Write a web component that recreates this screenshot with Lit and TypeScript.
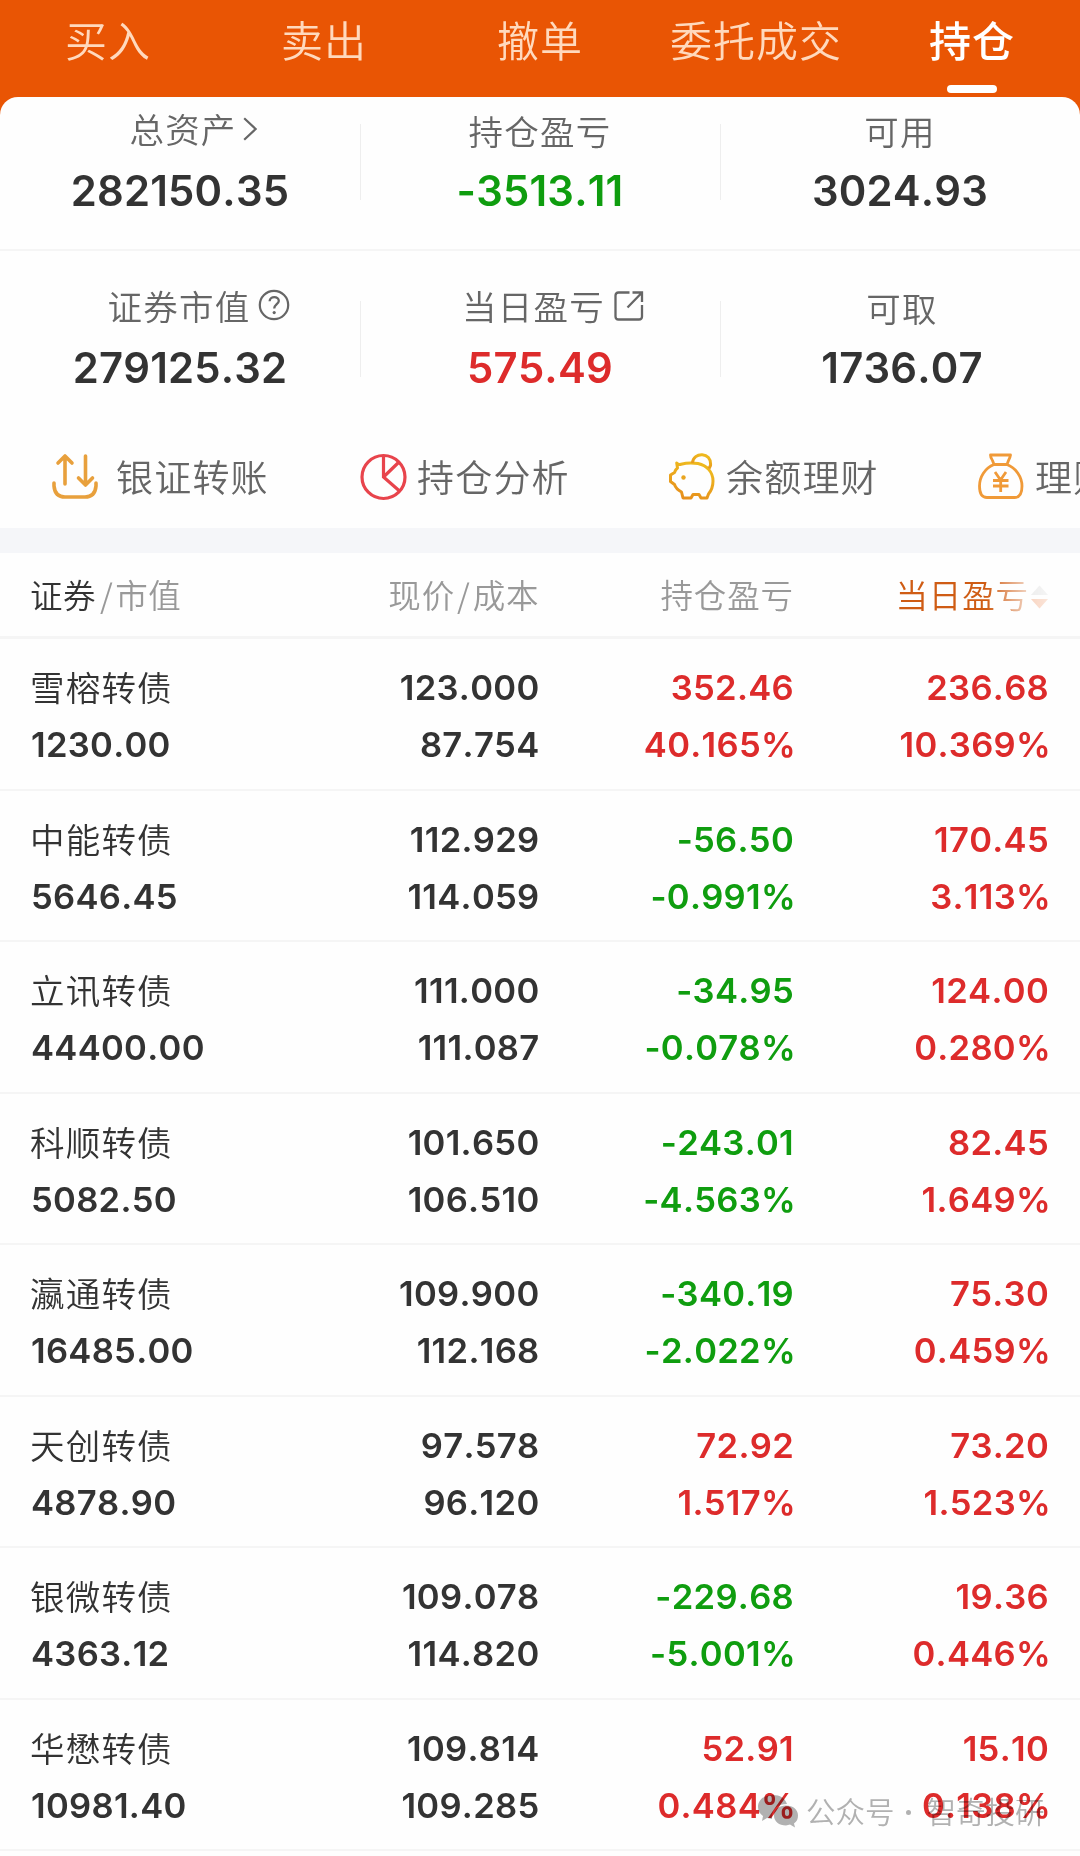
import { LitElement, html, css, svg } from "lit";
import { customElement } from "lit/decorators.js";

type Holding = [string, string, string, string, string, string, string, string];

const HOLDINGS: Holding[] = [
  ["雪榕转债", "1230.00", "123.000", "87.754", "352.46", "40.165%", "236.68", "10.369%"],
  ["中能转债", "5646.45", "112.929", "114.059", "-56.50", "-0.991%", "170.45", "3.113%"],
  ["立讯转债", "44400.00", "111.000", "111.087", "-34.95", "-0.078%", "124.00", "0.280%"],
  ["科顺转债", "5082.50", "101.650", "106.510", "-243.01", "-4.563%", "82.45", "1.649%"],
  ["瀛通转债", "16485.00", "109.900", "112.168", "-340.19", "-2.022%", "75.30", "0.459%"],
  ["天创转债", "4878.90", "97.578", "96.120", "72.92", "1.517%", "73.20", "1.523%"],
  ["银微转债", "4363.12", "109.078", "114.820", "-229.68", "-5.001%", "19.36", "0.446%"],
  ["华懋转债", "10981.40", "109.814", "109.285", "52.91", "0.484%", "15.10", "0.138%"],
];

const icons: Record<string, unknown> = {
  chevron: svg`<svg class="chev" viewBox="0 0 14 24"><path d="M1.2 1.2 12.6 12 1.2 22.8" fill="none" stroke="#666" stroke-width="2.2"/></svg>`,
  help: svg`<svg viewBox="0 0 32 32" fill="none" stroke="#666" stroke-width="2.2"><circle cx="16" cy="16" r="14.2"/><path d="M11.6 12.2c.2-5.6 9.4-5.4 9.2-.2-.2 3-4.6 3.600-4.600 7.600" stroke-width="2.300"/><circle cx="16.200" cy="23.600" r="1.600" fill="#666" stroke="none"/></svg>`,
  share: svg`<svg viewBox="0 0 30 30" fill="none" stroke="#666" stroke-width="2.300"><path d="M15.500 1.500H4.500q-3 0-3 3v21q0 3 3 3h20.500q3 0 3-3V14M18.500 1.500H28v9.500M28 1.500 13.500 16.500"/></svg>`,
};

@customElement("app-root")
export class AppRoot extends LitElement {
  static styles = css`
    :host {
      display: block; width: 1080px; height: 1856px; overflow: hidden; position: relative;
      background: #e95504; color: #333;
      font-family: Inter, "Noto Sans CJK SC", sans-serif;
    }
    * { box-sizing: border-box; }
    .cn { font-family: "Noto Sans CJK SC", sans-serif; font-weight: 350; }
    .tabs { display: flex; height: 97px; }
    .tab { flex: 1; display: flex; flex-direction: column; align-items: center; padding-top: 9px;
      font-size: 42px; line-height: 60px; letter-spacing: 1px; color: #ffd9bd; white-space: nowrap; }
    .tab.on { color: #fff; font-weight: 500; }
    .bar { width: 50px; height: 8px; border-radius: 4px; background: #fff; margin-top: 16px; }
    .panel { background: #fefefe; border-radius: 18px 18px 0 0; height: 1759px; }
    .sum { display: grid; grid-template-columns: repeat(3, 1fr); }
    .sum.first { height: 154px; border-bottom: 2px solid #f5f5f5; padding-top: 7px; }
    .sum.second { height: 177px; padding-top: 30px; }
    .cell { display: flex; flex-direction: column; align-items: center; position: relative; }
    .cell + .cell::before { content: ""; position: absolute; left: 0; top: 20px; width: 1px; height: 76px; background: #eee; }
    .sum.second .cell:last-child { padding-left: 4px; }
    .label { font-size: 34.5px; line-height: 48px; letter-spacing: 1.2px; color: #666; display: flex; align-items: center; white-space: nowrap; }
    .label.low { padding-top: 2px; margin-bottom: -2px; }
    .label.chevron { padding-left: 6px; }
    .label.help { padding-right: 2px; }
    .label.share { padding-right: 13px; }
    .icon { width: 0; display: flex; }
    .icon svg { flex: none; }
    .chevron svg { width: 14px; height: 24px; margin: 1px 0 0 6px; }
    .help svg { width: 32px; height: 32px; margin-left: 8px; }
    .share svg { width: 30px; height: 30px; margin: 1px 0 0 9px; }
    .val { font-size: 41.8px; line-height: 60px; font-weight: 600; letter-spacing: 0.2px; font-kerning: none; margin-top: 9px; }
    .up { color: #dd2b2b; }
    .down { color: #0f9d0f; }
    .acts { display: flex; height: 100px; padding-left: 51px; overflow: hidden; }
    .act { flex: none; width: 309px; height: 98px; display: flex; align-items: center; font-size: 37px; letter-spacing: 1.2px; color: #666; }
    .act svg { width: 48px; height: 48px; margin-right: 9px; flex: none; }
    .act.wide svg { margin-right: 17px; }
    .act span { margin-top: -2px; }
    .band { height: 25px; background: #f5f6f9; }
    .row { display: grid; grid-template-columns: 286px 222.5px 254.5px 255px; padding-left: 31px; height: 151.55px; border-bottom: 2px solid #f5f5f5; }
    .head { height: 86px; align-items: center; font-size: 32.5px; letter-spacing: 0.9px; color: #999; border-bottom-width: 3px; padding-bottom: 2px; }
    .head > div, .num { text-align: right; white-space: nowrap; }
    .head > div:first-child { text-align: left; margin-left: -1px; letter-spacing: 0.5px; }
    .head i { font-style: normal; margin: 0 2px; }
    .head i.wide { margin-left: 4px; }
    .dark { color: #333; }
    .sort { color: #cf5c14; display: flex; justify-content: flex-end; align-items: center;
      -webkit-mask-image: linear-gradient(90deg, #000 0, #000 192px, rgba(0,0,0,.25) 234px, rgba(0,0,0,.14) 255px); }
    .sort svg { width: 19px; height: 26px; margin: 6px 0 0 1px; }
    .pair { display: flex; flex-direction: column; padding-top: 20px; font-size: 34.6px; font-weight: 600; letter-spacing: 0.3px; font-kerning: none; line-height: 57px; white-space: nowrap; }
    .pair.num { align-items: flex-end; }
    .pct { margin-right: -2px; }
    .name { font-size: 34.5px; letter-spacing: 1.2px; position: relative; top: -1px; left: -1px; }
    .mark { position: absolute; left: 758px; top: 1788px; display: flex; align-items: center; height: 44px; color: #b2b2b2; mix-blend-mode: multiply; font-size: 29.5px; white-space: nowrap; }
    .mark svg { width: 40px; height: 34px; margin: 4px 8px 0 0; }
    .mark i { width: 5px; height: 5px; border-radius: 50%; background: currentColor; margin: 4px 16px 0 11px; }
  `;

  private cell(label: string, value: string, tone = "", icon = "", low = false) {
    return html`<div class="cell">
      <div class="label cn ${icon} ${low ? "low" : ""}">${label}${icon ? html`<span class="icon">${icons[icon]}</span>` : ""}</div>
      <div class="val ${tone}">${value}</div>
    </div>`;
  }

  private pair(a: string, b: string, tint = false) {
    const tone = tint ? (a.startsWith("-") ? "down" : "up") : "";
    return html`<div class="pair num ${tone}"><span>${a}</span><span class=${tint ? "pct" : ""}>${b}</span></div>`;
  }

  render() {
    return html`
      <div class="tabs cn">
        ${["买入", "卖出", "撤单", "委托成交", "持仓"].map((t, i) => html`<div class="tab ${i === 4 ? "on" : ""}">${t}${i === 4 ? html`<div class="bar"></div>` : ""}</div>`)}
      </div>
      <div class="panel">
        <div class="sum first">
          ${this.cell("总资产", "282150.35", "", "chevron")}
          ${this.cell("持仓盈亏", "-3513.11", "down", "", true)}
          ${this.cell("可用", "3024.93", "", "", true)}
        </div>
        <div class="sum second">
          ${this.cell("证券市值", "279125.32", "", "help")}
          ${this.cell("当日盈亏", "575.49", "up", "share")}
          ${this.cell("可取", "1736.07", "", "", true)}
        </div>
        <div class="acts cn">
          <div class="act wide"><svg viewBox="0 0 48 48" fill="none" stroke="#e8a03c" stroke-width="3.6" stroke-linecap="round" stroke-linejoin="round"><path d="M14 31V4M7 10l7-7 7 7M34.500 3v28M27.500 25l7 7 7-7M3 30v3q1 11 11 11h20q10 0 11-11v-3"/></svg><span>银证转账</span></div>
          <div class="act"><svg viewBox="0 0 48 48" fill="none" stroke="#e8444c" stroke-width="3.2"><circle cx="23.500" cy="24" r="21.500"/><path d="M23.500 2v22l16 14M23.500 24 39 9"/></svg><span>持仓分析</span></div>
          <div class="act"><svg viewBox="0 0 48 48" fill="none" stroke="url(#pig)" stroke-width="3" stroke-linejoin="round"><defs><linearGradient id="pig" x1="0" y1="1" x2=".4" y2="0"><stop stop-color="#e58a1c"/><stop offset="1" stop-color="#eeb81e"/></linearGradient></defs><path d="M7.700 10Q9.500 12 12 11.200Q20 9 29 10.500C38 12.500 44 19 44 28C44 34 42 38 39.500 41L38 45H32L30 41.500H24L22 45H14L12.500 39Q7 36 5.500 31.500L1.500 28.500V22L5.500 19.500Q6.500 16.500 8.500 15Z"/><path d="M23.500 10C24-1.500 43-1.500 41.500 12.500L40 15.500"/><circle cx="14.500" cy="24.500" r="2.200" fill="#e9a520" stroke="none"/></svg><span>余额理财</span></div>
          <div class="act"><svg viewBox="0 0 48 48" fill="none" stroke="#f09a38" stroke-width="2.800" stroke-linejoin="round"><path d="M12.500 2H32.500Q32 5 30.500 7.500L29 11.500H16L14.500 7.500Q12.500 5 12.500 2ZM16 11.500C7 15 1.500 24 1.500 33C1.500 40 4 44.500 9 44.500H36.500C41.500 44.500 44 40 44 33C44 24 38 15 29 11.500M17 19l5.500 8L28 19M15 27.500h15.500M15 33h15.500M22.700 27v12"/></svg><span>理财</span></div>
        </div>
        <div class="band"></div>
        <div class="row head cn">
          <div><span class="dark">证券</span><i class="wide">/</i>市值</div>
          <div>现价<i>/</i>成本</div>
          <div>持仓盈亏</div>
          <div class="sort">当日盈亏<svg viewBox="0 0 20 26"><path d="M10 1 19 11H1z" fill="#bbb"/><path d="M10 25 19 15H1z" fill="#e95504"/></svg></div>
        </div>
        ${HOLDINGS.map((h) => html`<div class="row">
          <div class="pair"><span class="name cn">${h[0]}</span><span>${h[1]}</span></div>
          ${this.pair(h[2], h[3])}${this.pair(h[4], h[5], true)}${this.pair(h[6], h[7], true)}
        </div>`)}
      </div>
      <div class="mark cn"><svg viewBox="0 0 40 34" fill="currentColor"><path d="M15 0C6 0 0 5 0 12c0 4 2 7 5 9l-1 5 5-3 5 1C13 14 20 9 29 9 27 3 22 0 15 0z"/><path d="M28 10.500c-7 0-12 4-12 10s5 10 12 10l4-1 5 3-1-4c3-2 4-5 4-8 0-6-5-10-12-10z"/></svg>公众号<i></i>智奇投研</div>
    `;
  }
}
